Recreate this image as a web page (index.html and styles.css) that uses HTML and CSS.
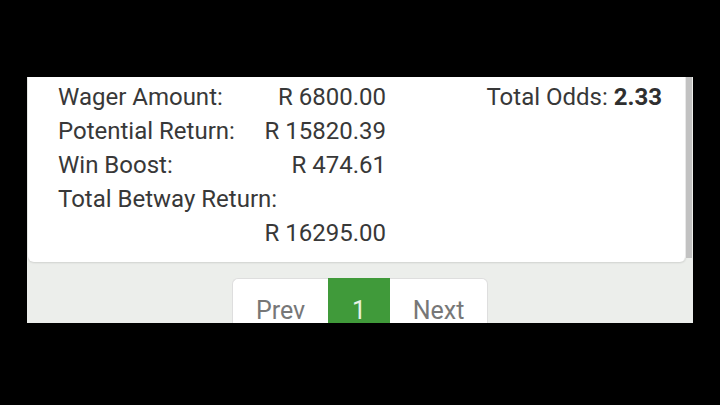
FILE: index.html
```html
<!DOCTYPE html>
<html lang="en">
<head>
  <meta charset="UTF-8">
  <meta name="viewport" content="width=device-width, initial-scale=1.0">
  <title>Bet Slip</title>
  <link rel="stylesheet" href="styles.css">
</head>
<body>
  <div class="screen">
    <div class="card">
      <div class="summary">
        <span class="label">Wager Amount:</span>
        <span class="value">R 6800.00</span>
        <span class="label">Potential Return:</span>
        <span class="value">R 15820.39</span>
        <span class="label">Win Boost:</span>
        <span class="value">R 474.61</span>
        <span class="label wide">Total Betway Return:</span>
        <span class="value last">R 16295.00</span>
      </div>
      <div class="odds">Total Odds: <b>2.33</b></div>
    </div>

    <div class="pager">
      <a class="page">Prev</a>
      <a class="page active">1</a>
      <a class="page">Next</a>
    </div>

    <div class="scroll-thumb"></div>
  </div>
</body>
</html>
```

FILE: styles.css
```css
* {
  box-sizing: border-box;
  margin: 0;
  padding: 0;
}
body {
  background-color: #000;
  font-family: Roboto, "Liberation Sans", sans-serif;
  width: 720px;
  height: 405px;
  overflow: hidden;
}
.screen {
  position: relative;
  margin: 77px 0 0 27px;
  width: 666px;
  height: 246px;
  overflow: hidden;
  background-color: #eceeeb;
}
.card {
  display: flex;
  justify-content: space-between;
  margin-left: 1px;
  width: 658px;
  padding: 3px 23px 12px 30px;
  background-color: #fff;
  border-right: 1px solid #e8e8e8;
  border-radius: 0 0 6px 6px;
  box-shadow: 0 1px 2px rgba(0, 0, 0, 0.12);
  color: #383838;
  font-size: 24px;
  line-height: 34px;
}
.summary {
  display: grid;
  grid-template-columns: 1fr auto;
  width: 328px;
}
.summary .value {
  text-align: right;
}
.summary .wide {
  grid-column: 1 / -1;
}
.summary .last {
  grid-column: 2;
}
.odds b {
  font-weight: 700;
  color: #2f2f2f;
}
.pager {
  display: flex;
  justify-content: center;
  margin-top: 16px;
}
.page {
  display: block;
  height: 60px;
  padding: 17px 0 0;
  background-color: #fff;
  border: 1px solid #dedede;
  color: #777;
  font-size: 25px;
  line-height: 30px;
  text-align: center;
}
.page:first-child {
  width: 96px;
  border-right: none;
  border-radius: 6px 0 0 0;
}
.page:last-child {
  width: 98px;
  border-left: none;
  border-radius: 0 6px 0 0;
}
.page.active {
  width: 62px;
  background-color: #409a3a;
  border-color: #409a3a;
  color: #e8f3e6;
}
.scroll-thumb {
  position: absolute;
  top: 0;
  right: 1px;
  width: 6px;
  height: 181px;
  background-color: #c2c2c2;
}
```
